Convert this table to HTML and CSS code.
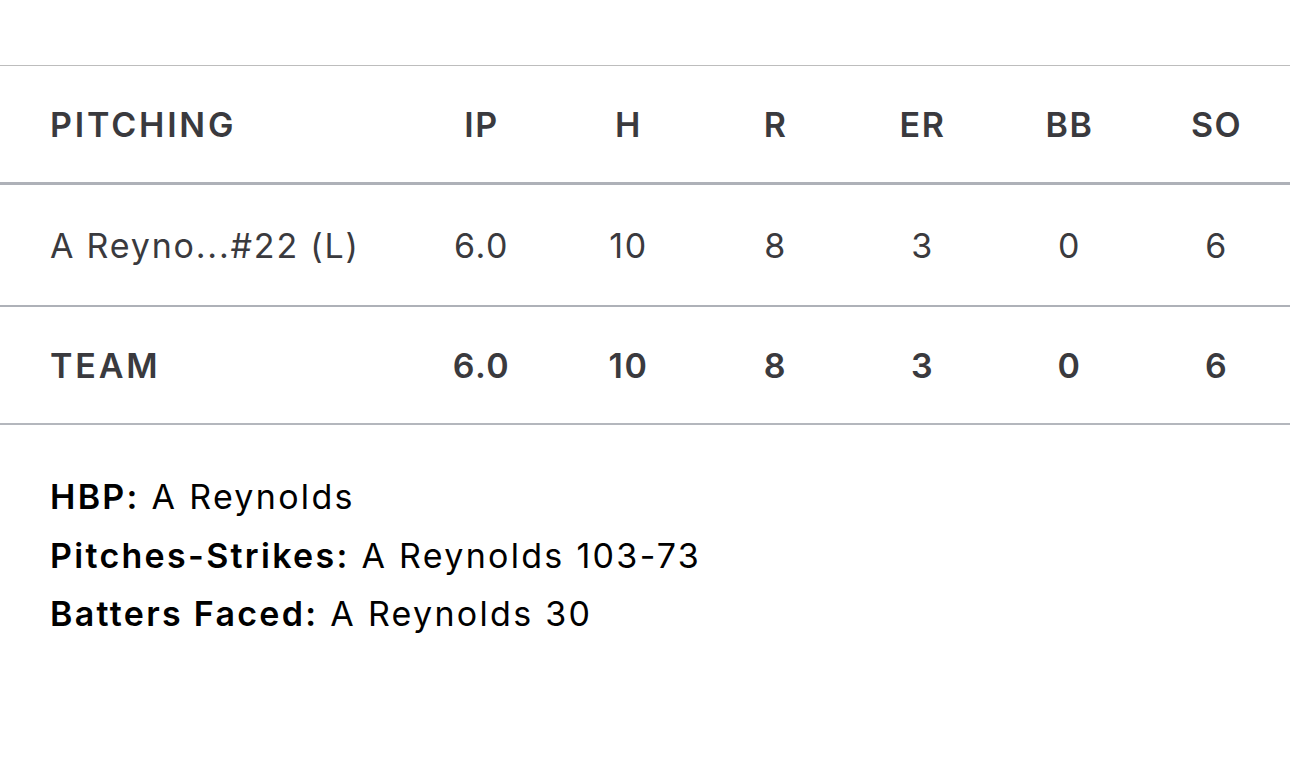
FILE: index.html
```html
<!DOCTYPE html>
<html lang="en">
<head>
<meta charset="utf-8">
<title>Pitching</title>
<link rel="stylesheet" href="styles.css">
</head>
<body>
<div class="box">
  <div class="stats">
    <div class="row head">
      <div class="name">PITCHING</div>
      <div class="c">IP</div><div class="c">H</div><div class="c">R</div><div class="c">ER</div><div class="c">BB</div><div class="c">SO</div>
    </div>
    <div class="row player">
      <div class="name">A Reyno...#22 (L)</div>
      <div class="c">6.0</div><div class="c">10</div><div class="c">8</div><div class="c">3</div><div class="c">0</div><div class="c">6</div>
    </div>
    <div class="row team">
      <div class="name">TEAM</div>
      <div class="c">6.0</div><div class="c">10</div><div class="c">8</div><div class="c">3</div><div class="c">0</div><div class="c">6</div>
    </div>
  </div>
  <div class="notes">
    <p><b>HBP:</b> A Reynolds</p>
    <p><b>Pitches-Strikes:</b> A Reynolds 103-73</p>
    <p><b>Batters Faced:</b> A Reynolds 30</p>
  </div>
</div>
</body>
</html>
```
FILE: styles.css
```css
html, body {
  margin: 0;
  padding: 0;
  background: #ffffff;
}
body {
  font-family: "Inter", "Liberation Sans", sans-serif;
  color: #3a3a3e;
  width: 1290px;
  height: 782px;
  overflow: hidden;
}
.box {
  padding-top: 65px;
}
.stats {
  border-top: 1px solid #bdbdbd;
}
.row {
  display: grid;
  grid-template-columns: 1fr repeat(6, 147px);
  align-items: center;
  padding-left: 50px;
  font-size: 34px;
}
.row .c {
  text-align: center;
  letter-spacing: 1.5px;
}
.head {
  height: 116px;
  border-bottom: 3px solid #aeb1b8;
  font-weight: 600;
}
.head .name,
.team .name {
  letter-spacing: 2.8px;
}
.player {
  height: 120px;
  border-bottom: 2px solid #aeb1b8;
  font-weight: 400;
}
.player .name {
  letter-spacing: 1.8px;
}
.team {
  height: 116px;
  border-bottom: 2px solid #b4b7bd;
  font-weight: 600;
}
.notes {
  padding: 43px 0 0 50px;
  color: #000000;
  font-size: 34px;
  letter-spacing: 2.3px;
}
.notes p {
  margin: 0;
  line-height: 58.5px;
}
.notes b {
  font-weight: 600;
}
```
